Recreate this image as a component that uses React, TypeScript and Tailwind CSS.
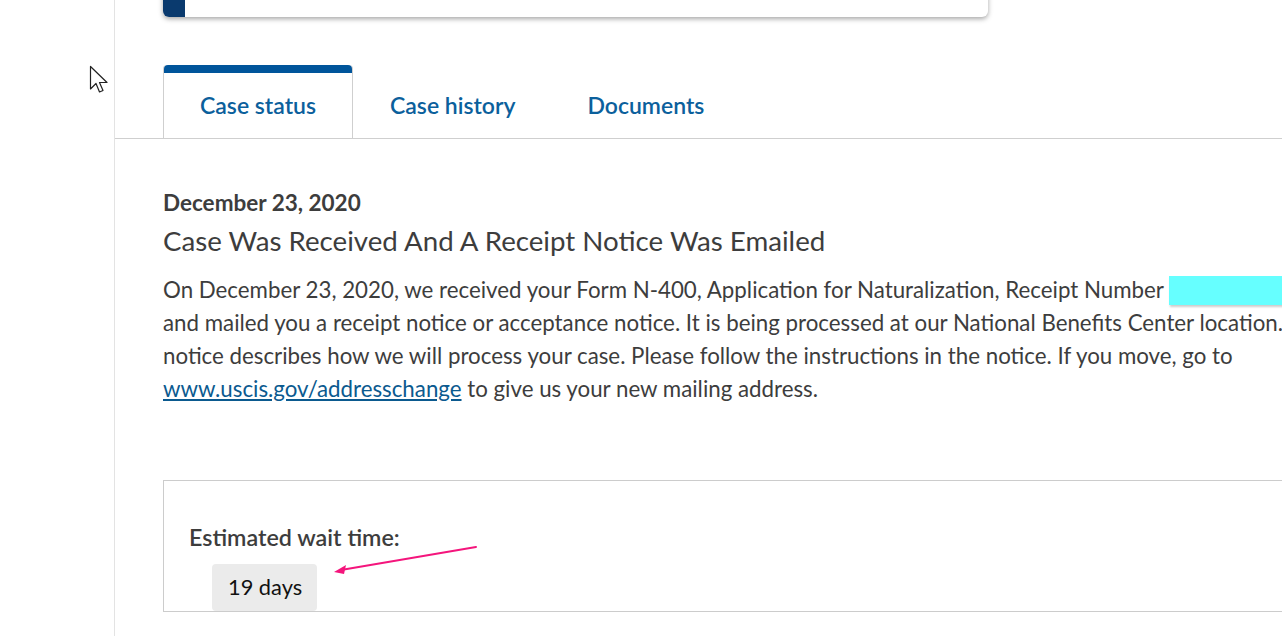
import React from "react";

const font = { fontFamily: "Lato, 'Open Sans', sans-serif" };

function Cursor() {
  return (
    <svg className="absolute left-[89px] top-[65px]" width="22" height="30" viewBox="0 0 22 30">
      <path d="M1.5 1.5 L1.5 24 L7 18.5 L10.5 27 L14 25.5 L10.5 17.5 L18 17.5 Z" fill="#fff" stroke="#222" strokeWidth="1.2" strokeLinejoin="round" />
    </svg>
  );
}

function PinkArrow() {
  return (
    <svg className="absolute left-[325px] top-[540px]" width="160" height="40" viewBox="0 0 160 40">
      <line x1="151" y1="7" x2="16" y2="30" stroke="#f4157c" strokeWidth="2" strokeLinecap="round" />
      <path d="M9 32 L21 25 L19 34 Z" fill="#f4157c" />
    </svg>
  );
}

function Tab({ label, active }: { label: string; active?: boolean }) {
  if (active) {
    return (
      <div className="relative -mb-px flex h-[73px] flex-col rounded-t-[4px] border-x border-[#cfcfcf] bg-white">
        <div className="h-[8px] rounded-t-[4px] bg-[#00559b]" />
        <div className="flex flex-1 items-center px-[36px] text-[23px] font-semibold text-[#0b609c]">{label}</div>
      </div>
    );
  }
  return (
    <div className="flex h-[73px] flex-col">
      <div className="h-[8px]" />
      <div className="flex flex-1 items-center px-[37px] text-[23px] font-semibold text-[#0b609c]">{label}</div>
    </div>
  );
}

export default function App() {
  return (
    <div className="relative flex h-[636px] w-[1282px] overflow-hidden bg-white" style={font}>
      <aside className="w-[115px] shrink-0 border-r border-[#e3e3e3]" />
      <main className="flex-1 min-w-0">
        <div className="ml-[48px] mt-[-10px] flex h-[27px] w-[825px] overflow-hidden rounded-b-[6px] bg-white shadow-[0_2px_5px_rgba(0,0,0,0.35)]">
          <div className="w-[22px] bg-[#0a3a6e]" />
        </div>

        <div className="mt-[48px] flex border-b border-[#cfcfcf] pl-[48px]">
          <Tab label="Case status" active />
          <Tab label="Case history" />
          <div className="-ml-[2px]">
            <Tab label="Documents" />
          </div>
        </div>

        <section className="pl-[48px] text-[#3d3d3d]">
          <div className="mt-[50px] text-[22.5px] font-bold leading-[28px]">December 23, 2020</div>
          <h2 className="mt-[7px] text-[27.7px] leading-[34px] font-normal">Case Was Received And A Receipt Notice Was Emailed</h2>
          <p className="mt-[15px] w-[1400px] whitespace-nowrap text-[22.3px] leading-[33px]">
            On December 23, 2020, we received your Form N-400, Application for Naturalization, Receipt Number{" "}
            <span className="inline-block h-[29px] w-[160px] align-[-7px] bg-[#66ffff] shadow-[1px_2px_2px_rgba(0,0,0,0.2)]" />
            <br />
            and mailed you a receipt notice or acceptance notice. It is being processed at our National Benefits Center location. The receipt
            <br />
            notice describes how we will process your case. Please follow the instructions in the notice. If you move, go to
            <br />
            <a href="#" className="text-[#0b5a8f] underline underline-offset-2">www.uscis.gov/addresschange</a> to give us your new mailing address.
          </p>

          <div className="mt-[75px] h-[132px] w-[1200px] border border-[#cccccc] pl-[25px] pt-[41px]">
            <div className="text-[23.3px] font-semibold leading-[30px]">Estimated wait time:</div>
            <div className="ml-[23px] mt-[12px] inline-flex h-[47px] w-[105px] items-center rounded-[4px] bg-[#ebebeb] pl-[16px] text-[21.8px] text-[#111]">
              19 days
            </div>
          </div>
        </section>
      </main>
      <Cursor />
      <PinkArrow />
    </div>
  );
}
